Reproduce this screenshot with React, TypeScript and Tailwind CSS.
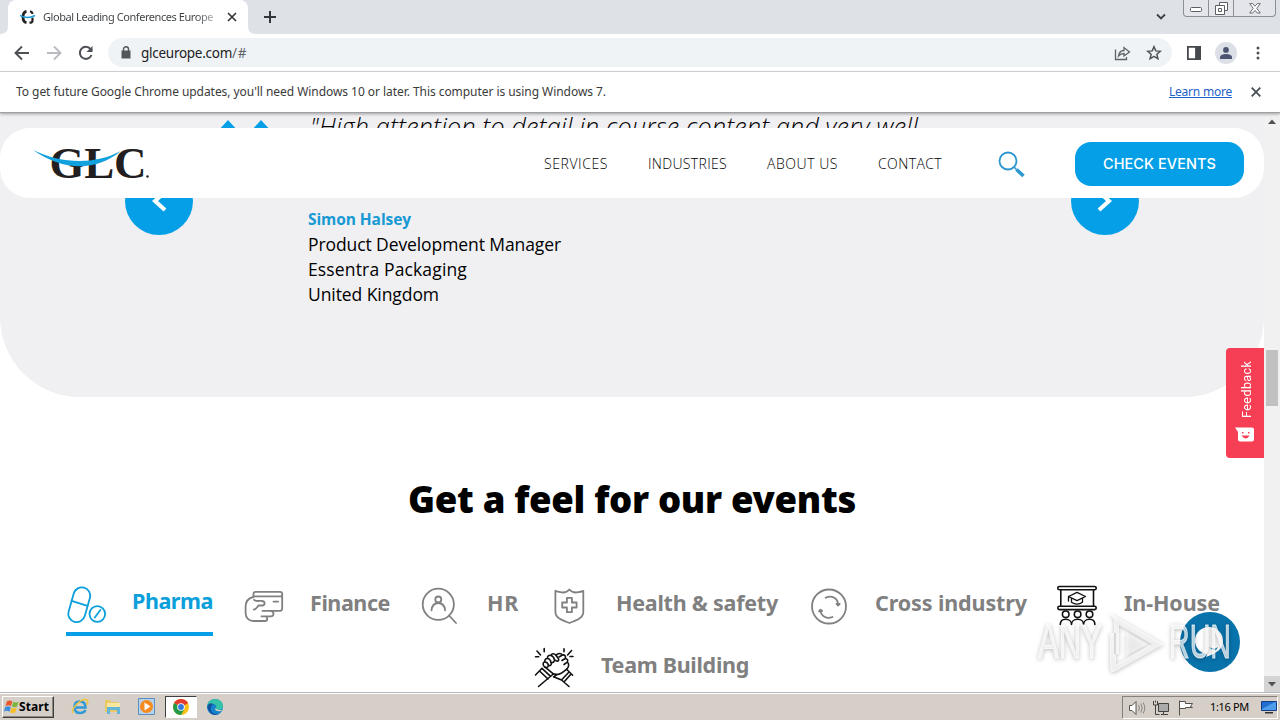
import React, { useLayoutEffect, useRef, useState } from 'react';

// --- Helpers ---

interface FitProps {
  width: number;
  className?: string;
  children: string;
}

// Single line of text, tracked so that it fills the given width
const Fit: React.FC<FitProps> = ({ width, className = '', children }) => {
  const ref = useRef<HTMLSpanElement>(null);
  const [spacing, setSpacing] = useState(0);

  useLayoutEffect(() => {
    if (!ref.current) return;
    const natural = ref.current.getBoundingClientRect().width;
    setSpacing((width - natural) / children.length);
  }, []);

  return (
    <span className={`block whitespace-nowrap ${className}`} style={{ width }}>
      <span ref={ref} style={{ letterSpacing: spacing }}>{children}</span>
    </span>
  );
};

const iconProps = {
  width: 40,
  height: 40,
  viewBox: '0 0 40 40',
  fill: 'none',
  stroke: 'currentColor',
  strokeWidth: 1.8,
  strokeLinecap: 'round' as const,
  strokeLinejoin: 'round' as const,
  className: 'shrink-0 overflow-visible',
};

// --- Category icons ---

const PharmaIcon = () => (
  <svg {...iconProps}>
    <rect x="4.900" y="2" width="16.800" height="35.500" rx="8.400" transform="rotate(16 13.3 19.6)" />
    <path d="M5.600 15.800 21.500 20.800M28.800 32.500l5.600-7.500" />
    <circle cx="31.300" cy="29" r="7.800" />
  </svg>
);

const FinanceIcon = () => (
  <svg {...iconProps}>
    <path d="M10.500 12V9q0-2.200 2.200-2.200H37q2.200 0 2.200 2.200v14.600q0 2.200-2.200 2.200H19.500" />
    <path d="M10.500 11.300H38.800M30.500 16.600h4.600" />
    <path d="M10.500 12C5.500 13 2.600 17 2.600 22v6c0 5 3.500 8 8 8H22c3 0 3-4.600 0-4.600h-3.500H28c3.300 0 3.300-5 0-5.500" />
    <path d="M11 14.800c2 2 6 .8 8.200 1.200 3.400.6 2.800 4.200.3 4.500h-4c-1.500 1.500-2 3.500-4.700 4.200" />
  </svg>
);

const HrIcon = () => (
  <svg {...iconProps}>
    <circle cx="18.300" cy="19.300" r="15.600" />
    <circle cx="18.300" cy="14.500" r="3" />
    <path d="M29 30.500 36 38M11.500 25.300c.5-4.500 3-7.300 6.800-7.300s6.300 2.800 6.800 7.300" />
  </svg>
);

const HealthIcon = () => (
  <svg {...iconProps}>
    <path d="M20.400 4.500Q17 8.500 11.500 7.200 8.500 6.800 6.400 5.800V27c0 6 7 8.500 14 11 7-2.500 13.900-5 13.900-11V5.800Q32 6.800 29.200 7.200 23.800 8.500 20.400 4.500Z" />
    <path d="M17.900 12.800h5v4.700h4.700v5h-4.700v4.700h-5v-4.700h-4.700v-5h4.700Z" />
  </svg>
);

const CrossIcon = () => (
  <svg {...iconProps}>
    <circle cx="21" cy="21.500" r="17" />
    <path d="M17.600 12.800C24 9.800 30 13.500 30 19.500M24.500 32C18.500 34.500 13 31 12.500 25.500" />
    <path d="m28.500 18.800 1.500 1.700 1.700-1.700ZM11 26.300l1.500-1.700 1.600 1.400Z" fill="currentColor" />
  </svg>
);

const InHouseIcon = () => (
  <svg {...iconProps} stroke="#111111" strokeWidth="1.600">
    <rect x=".8" y="1.500" width="38.400" height="3.300" rx="1.600" />
    <rect x=".8" y="21.300" width="38.400" height="3.300" rx="1.600" />
    <path d="M3.800 5v16M36.500 5v16" />
    <path d="m20 7.300-8.500 4.200 8.500 4.200 8.500-4.200ZM14.500 13.500v3.800q5.500 3.500 11 0v-3.800M11.500 11.500v4.500" strokeWidth="1.300" />
    <circle cx="8.700" cy="29.300" r="3.300" />
    <circle cx="20.600" cy="29.300" r="3.300" />
    <circle cx="32.500" cy="29.300" r="3.300" />
    <path d="M3.300 39.500c0-3 2-5.200 5.400-5.200s5.800 2.200 5.800 5.200c0-3 2.500-5.200 6.100-5.200s6 2.200 6 5.200c0-3 2.400-5.200 5.900-5.200s5.400 2.200 5.400 5.200" />
  </svg>
);

const TeamIcon = () => (
  <svg {...iconProps} stroke="#111111" strokeWidth="1.600">
    <path d="m3 4 3.500 4M10.200 1.500v3.200M1.500 9.800h3.200M37.600 3.500l-4 4.500M30 1.800v3M39 9.500h-3" />
    <path d="M9.500 18.500c-1-2 0-3.500 1.500-3.500-.8-2 .8-3.800 2.500-3.500-.5-2.200 1.500-3.800 3.500-3 .3-2 3-2.500 4.800-.5l2.700 3.800c1 2-1.500 3.200-3 1.500M11 15c2 0 3 1.500 3.500 3.500M13.500 11.500c2 0 3 1.800 3.500 4M17 8.500c2 .5 3 2 3.500 4.300M9.500 18.500c1 2.500 4 3 5 0 2 .5 3.500-1 2.500-3 2 .5 3.500-.8 3.500-2.700" />
    <path d="M22 8.300C24 6 27 5.800 28.500 8l-3.500 2M28.500 8c2.500-.5 3.500 1.500 2.800 3.500L28 13.500M31.300 11.500c2 0 3 2 2 3.700L30 17.500M33.300 15.200c2.200 1.500 1.600 5-.7 7-4 3.500-6 5.300-9.300 5.300l-4-.6-8.500-7" />
    <path d="m8 21.300 8.600 8M5.500 24l8.500 8M8 21.300 1.500 28M19.300 27 4.500 39.500M32.600 22.200l6 6M23 27.500l-3.500 2.300 8 3.200 7.500-8M30 35l6.600-7.500M27.500 33l7.500 6.500" />
  </svg>
);

const categories = [
  { name: 'Finance', width: 80, icon: <FinanceIcon /> },
  { name: 'HR', width: 32, icon: <HrIcon /> },
  { name: 'Health & safety', width: 162, icon: <HealthIcon /> },
  { name: 'Cross industry', width: 152, icon: <CrossIcon /> },
  { name: 'In-House', width: 96, icon: <InHouseIcon /> },
];

const navLinks = [
  { name: 'SERVICES', width: 64 },
  { name: 'INDUSTRIES', width: 79 },
  { name: 'ABOUT US', width: 71 },
  { name: 'CONTACT', width: 64 },
];

// --- Browser chrome ---

const TabStrip = () => (
  <div className="flex h-[34px] shrink-0 bg-[#dee1e6]">
    <svg width="8" height="34" viewBox="0 0 8 34" fill="#fff"><path d="M8 26v8H0q8 0 8-8Z" /></svg>
    <div className="flex h-[34px] w-[240px] items-center rounded-t-lg bg-white pl-[12px]">
      <svg width="16" height="16" viewBox="0 0 16 16" fill="none">
        <path d="M6.500 2.300Q3 3 3 8t3.500 5.700" stroke="#222" strokeWidth="2.800" />
        <path d="M10 2.300q2 .5 2.700 2.500M9.500 13.700q3 0 3-2V8.500" stroke="#222" strokeWidth="2.200" />
        <path d="M0 6.500q7 4 15 0" stroke="#19a0dc" strokeWidth="1.500" />
      </svg>
      <Fit width={170} className="ml-[7px] mr-[14px] bg-gradient-to-r from-[#3c4043] from-90% to-[#b0b3b6] bg-clip-text font-['Noto_Sans'] text-[11px] text-transparent">Global Leading Conferences Europe</Fit>
      <svg width="10" height="10" viewBox="0 0 10 10" stroke="#33373b" strokeWidth="1.700"><path d="m1 1 8 8M9 1 1 9" /></svg>
    </div>
    <svg width="8" height="34" viewBox="0 0 8 34" fill="#fff"><path d="M0 26v8h8q-8 0-8-8Z" /></svg>
    <svg className="ml-[7px] mt-[10px]" width="14" height="14" viewBox="0 0 14 14" stroke="#33373b" strokeWidth="2"><path d="M7 1v12M1 7h12" /></svg>
    <svg className="ml-auto mt-[13px]" width="10" height="8" viewBox="0 0 10 8" fill="none" stroke="#3c4043" strokeWidth="1.800"><path d="m1 1.500 4 4 4-4" /></svg>
    <div className="ml-[17px] mr-[4px] flex h-[17px] w-[93px] rounded-b-[4px] border border-t-0 border-[#8b8f98] bg-[#e3e5ea]">
      <div className="flex w-[25px] items-center justify-center border-r border-[#8b8f98] pt-[3px]">
        <svg width="12" height="5" viewBox="0 0 12 5" fill="#fff" stroke="#5b5f66"><rect x=".5" y=".5" width="11" height="4" rx="1" /></svg>
      </div>
      <div className="flex w-[25px] items-center justify-center border-r border-[#8b8f98]">
        <svg width="13" height="13" viewBox="0 0 13 13" fill="#fff" stroke="#5b5f66"><path d="M4.500.5h8v8h-8Z" /><path d="M.5 3.500h9v9h-9Z" /><path d="M3.500 6.500h3v3h-3Z" /></svg>
      </div>
      <div className="flex flex-1 items-center justify-center">
        <svg width="12" height="11" viewBox="0 0 12 11" fill="#fff" stroke="#5b5f66" strokeWidth=".9"><path d="M.7.600h3L6 3.200 8.300.600h3L7.800 5.300l3.500 4.700h-3L6 7.400 3.700 10h-3l3.500-4.700Z" /></svg>
      </div>
    </div>
  </div>
);

const Toolbar = () => (
  <div className="flex h-[38px] shrink-0 items-center border-b border-[#d9dbdf] bg-white pl-[14px]">
    <svg width="16" height="16" viewBox="0 0 16 16" fill="none" stroke="#4d5156" strokeWidth="1.900"><path d="M15 8H2M8 1.500 1.500 8 8 14.500" /></svg>
    <svg className="ml-[17px]" width="16" height="16" viewBox="0 0 16 16" fill="none" stroke="#b9bbbe" strokeWidth="1.900"><path d="M0 8h13M7 1.500 13.500 8 7 14.500" /></svg>
    <svg className="ml-[15px]" width="16" height="16" viewBox="0 0 16 16" fill="none" stroke="#4d5156" strokeWidth="2"><path d="M13.500 10A6 6 0 1 1 12.500 4L14 5.500" /><path d="M14.500 1v6h-6Z" fill="#4d5156" stroke="none" /></svg>
    <div className="ml-[14px] flex h-[29px] w-[1064px] items-center rounded-full bg-[#f0f3f5] pl-[13px]">
      <svg width="10" height="13" viewBox="0 0 10 13" fill="#53575c"><path d="M.5 4.500h9v8h-9Z" /><path d="M2.500 5V3.300a2.500 2.500 0 0 1 5 0V5" fill="none" stroke="#53575c" strokeWidth="1.400" /></svg>
      <div className="ml-[10px] mt-px flex font-['Noto_Sans'] text-[13.5px]">
        <Fit width={91} className="text-[#202124]">glceurope.com</Fit>
        <Fit width={15} className="text-[#5f6368]">/#</Fit>
      </div>
      <svg className="ml-auto" width="17" height="16" viewBox="0 0 17 16" fill="none" stroke="#5f6368" strokeWidth="1.300"><path d="M1.500 4.500v10h11V12" /><path d="M4.500 11C5 7.500 7 5.500 10 5.500v-3L15.500 7 10 11V8.500Q6.500 8.500 4.500 11Z" /></svg>
      <svg className="ml-[15px] mr-[10px]" width="16" height="16" viewBox="0 0 16 16" fill="none" stroke="#4d5156" strokeWidth="1.500"><path d="m8 1.700 1.800 4.200 4.500.4-3.400 3 1 4.500L8 11.400l-3.900 2.400 1-4.500-3.400-3 4.500-.4Z" /></svg>
    </div>
    <svg className="ml-[15px]" width="14" height="14" viewBox="0 0 14 14" fill="none" stroke="#46494e" strokeWidth="1.800"><path d="M.9.900h12.200v12.200H.9Z" /><path d="M9 1h4v12H9Z" fill="#46494e" /></svg>
    <div className="ml-[14px] flex size-[22px] items-center justify-center rounded-full bg-[#dce0e6]">
      <svg width="12" height="12" viewBox="0 0 12 12" fill="#4b5572"><circle cx="6" cy="2.900" r="2.900" /><path d="M0 12V9.800Q1 7 6 7t6 2.800V12Z" /></svg>
    </div>
    <svg className="ml-[19px]" width="4" height="14" viewBox="0 0 4 14" fill="#4d5156"><circle cx="2" cy="2" r="1.500" /><circle cx="2" cy="7" r="1.500" /><circle cx="2" cy="12" r="1.500" /></svg>
  </div>
);

const InfoBar = () => (
  <div className="z-20 flex h-[41px] shrink-0 items-center border-b border-[#9fa0a3] bg-white pl-4 font-['Noto_Sans'] text-[12px] shadow-[0_1px_3px_rgba(0,0,0,0.35)]">
    <Fit width={590} className="text-[#3a3a3a]">To get future Google Chrome updates, you'll need Windows 10 or later. This computer is using Windows 7.</Fit>
    <Fit width={63} className="ml-auto text-[#1f62c9] underline">Learn more</Fit>
    <svg className="ml-[19px] mr-[19px]" width="10" height="10" viewBox="0 0 10 10" stroke="#4d5156" strokeWidth="1.900"><path d="m.7.700 8.600 8.600M9.300.700.7 9.300" /></svg>
  </div>
);

const Scrollbar = () => (
  <div className="flex w-4 shrink-0 flex-col items-center bg-[#f1f1f1]">
    <svg className="mt-[6px]" width="8" height="5" viewBox="0 0 8 5" fill="#505050"><path d="m0 5 4-4.500L8 5Z" /></svg>
    <div className="mt-[226px] h-[56px] w-3 bg-[#c1c1c1]" />
    <div className="mt-auto flex h-4 w-full items-center justify-center bg-[#d4d4d4]">
      <svg width="8" height="5" viewBox="0 0 8 5" fill="#505050"><path d="m0 0 4 4.500L8 0Z" /></svg>
    </div>
  </div>
);

// --- Page ---

const SiteHeader = () => (
  <header className="absolute inset-x-0 top-[15px] flex h-[70px] items-center rounded-[30px] bg-white pl-[32px] pr-5">
    <svg width="120" height="36" viewBox="0 0 120 36" className="overflow-visible">
      <text x="17.500" y="32.500" fontFamily="'Liberation Serif', serif" fontWeight="700" fontSize="45" textLength="97" fill="#231f20">GLC</text>
      <path d="M1 5C30 19 62 20 89 6 62 28 30 25 1 5Z" fill="#12a1df" />
      <circle cx="115.500" cy="31.500" r="1.200" fill="#231f20" />
    </svg>
    <nav className="ml-[392px] flex gap-10 font-['Open_Sans'] text-[14px] font-light text-black">
      {navLinks.map(link => (
        <Fit key={link.name} width={link.width}>{link.name}</Fit>
      ))}
    </nav>
    <svg className="ml-[56px] mt-[4px]" width="28" height="28" viewBox="0 0 28 28" fill="none" stroke="#2d97cf">
      <circle cx="10" cy="10" r="8.500" strokeWidth="1.800" />
      <path d="m16 16 2.500 2.500" strokeWidth="1.600" />
      <path d="m18.500 18.500 7 6.500" strokeWidth="3.600" />
    </svg>
    <button className="ml-auto mt-[2px] flex h-[44px] w-[169px] items-center justify-center rounded-[16px] bg-[#049fe6] font-['Inter'] text-[14.5px] font-medium text-white">
      <Fit width={113}>CHECK EVENTS</Fit>
    </button>
  </header>
);

const Testimonial = () => (
  <section className="flex h-[284px] items-start overflow-hidden rounded-b-[80px] bg-[#f0f0f3]">
    <div className="ml-[125px] mt-[54px] flex size-[68px] items-center justify-center rounded-full bg-[#049fe6]">
      <svg width="18" height="24" viewBox="0 0 18 24" fill="none" stroke="#fff" strokeWidth="4"><path d="M15 3 5 12l10 9" /></svg>
    </div>
    <svg className="ml-[24px] mt-[7px]" width="56" height="24" viewBox="0 0 56 24" fill="#049fe6"><path d="m11 0 11 12-11 12L0 12ZM44 0l11 12-11 12-11-12Z" /></svg>
    <div className="-mt-[3px] ml-[35px] font-['Open_Sans'] text-black">
      <Fit width={608} className="h-[97px] pl-[2px] text-[25px] font-light italic leading-8">"High attention to detail in course content and very well</Fit>
      <Fit width={103} className="text-[15.5px] font-bold leading-[25px] text-[#1799d3]">Simon Halsey</Fit>
      <Fit width={253} className="text-[17.5px] leading-[25px]">Product Development Manager</Fit>
      <Fit width={159} className="text-[17.5px] leading-[25px]">Essentra Packaging</Fit>
      <Fit width={131} className="text-[17.5px] leading-[25px]">United Kingdom</Fit>
    </div>
    <div className="ml-auto mr-[125px] mt-[54px] flex size-[68px] items-center justify-center rounded-full bg-[#049fe6]">
      <svg width="18" height="24" viewBox="0 0 18 24" fill="none" stroke="#fff" strokeWidth="4"><path d="m3 3 10 9-10 9" /></svg>
    </div>
  </section>
);

const Events = () => (
  <section className="pt-[78px] font-['Noto_Sans'] font-bold text-[#808080]">
    <h2 className="ml-[408px] text-[36.5px] font-black leading-[48px] text-black">
      <Fit width={448}>Get a feel for our events</Fit>
    </h2>
    <div className="mt-[62px] flex h-[51px] gap-[30px] pl-[66px] text-[21.5px] leading-[30px]">
      <div className="flex w-[147px] gap-[26px] border-b-4 border-[#049fe6] text-[#0b9fdb]">
        <PharmaIcon />
        <Fit width={81} className="pt-px">Pharma</Fit>
      </div>
      {categories.map(category => (
        <div key={category.name} className="flex gap-[27px]">
          {category.icon}
          <Fit width={category.width} className="pt-[3px]">{category.name}</Fit>
        </div>
      ))}
    </div>
    <div className="mt-[11px] flex gap-[27px] pl-[534px] text-[21.5px] leading-[30px]">
      <TeamIcon />
      <Fit width={148} className="pt-[3px]">Team Building</Fit>
    </div>
  </section>
);

const Watermark = () => (
  <svg className="absolute left-[1034px] top-[495px] drop-shadow-[0_1px_2px_rgba(0,0,0,0.35)]" width="204" height="70" viewBox="0 0 204 70" fill="#fff" fillOpacity=".7" stroke="#fff" strokeOpacity=".7">
    <text x="4" y="50" fontFamily="'Liberation Sans Narrow', 'Liberation Sans', sans-serif" fontSize="48" textLength="64" lengthAdjust="spacingAndGlyphs">ANY</text>
    <path d="M76 5 130 36 82 63Q76 66 76 60V25h6v31l36-20-33-19v29h-5V12Z" fillRule="evenodd" stroke="none" />
    <path d="M92 24 113 36 92 48Z" fillOpacity=".55" stroke="none" />
    <text x="135" y="50" fontFamily="'Liberation Sans Narrow', 'Liberation Sans', sans-serif" fontSize="48" textLength="62" lengthAdjust="spacingAndGlyphs">RUN</text>
  </svg>
);

const Feedback = () => (
  <div className="absolute right-0 top-[235px] flex h-[110px] w-[38px] flex-col items-center rounded-l-[4px] bg-[#f63e54] pt-[12px] text-white">
    <span className="ml-[3px] h-[58px] rotate-180 font-['Roboto'] text-[12.5px] leading-4 tracking-[0.45px] [writing-mode:vertical-rl]">Feedback</span>
    <svg className="mt-[9px]" width="20" height="16" viewBox="0 0 20 16" fill="#fff">
      <path d="M0 .5h17q2 0 2 2v10q0 2-2 2H5q-2 0-2-2V5Z" />
      <path d="M6.500 8.500q4.500 6 8 0Z" fill="#f63e54" />
      <path d="M7 5h1.500v1.500H7ZM13 5h1.500v1.500H13Z" fill="#f63e54" />
    </svg>
  </div>
);

const ChatButton = () => (
  <div className="absolute left-[1180px] top-[499px] flex size-[60px] items-center justify-center rounded-full bg-[#0872aa]">
    <svg width="30" height="32" viewBox="0 0 30 32"><path d="M15 1a14 14 0 0 1 13 14c0 8-6 12-17 16l1-3A13.500 13.500 0 0 1 15 1Z" fill="#fff" /><path d="M14 21q5 3 9 0l-2 3q-4 1-7-3Z" fill="#0872aa" /></svg>
  </div>
);

// --- Windows taskbar ---

const Taskbar = () => (
  <div className="flex h-7 shrink-0 items-start border-t border-[#b9b7b3] bg-[#d5cfc8] pt-px shadow-[inset_0_1px_0_#fff]">
    <div className="ml-[2px] mt-[2px] flex h-[22px] w-[52px] items-center border border-b-[#3f3f3f] border-l-white border-r-[#3f3f3f] border-t-white pl-px shadow-[inset_-1px_-1px_0_#8c8983]">
      <svg width="15" height="16" viewBox="0 0 16 16"><path d="M3 2q3-2 6 0L7.500 7Q5 5 1.500 7Z" fill="#e9582b" /><path d="M10 2.500q3 1.500 5.500 0L14 7.500Q11 9 8.500 7.500Z" fill="#7db53b" /><path d="M1.200 8Q4.500 6.500 7.200 8L6 13Q3 11 0 13Z" fill="#3f8edb" /><path d="M8 8.700q3 1.500 5.700 0l-1.500 5Q9 15.500 6.700 13.500Z" fill="#f6bd2a" /></svg>
      <Fit width={30} className="font-['Noto_Sans'] text-[12px] font-bold leading-5 text-black">Start</Fit>
    </div>
    <svg className="ml-[17px] mt-[4px]" width="18" height="18" viewBox="0 0 18 18" fill="none"><path d="M14.500 12Q13 15 9 15q-5.500 0-5.500-6T9 3.500q5.500 0 5.500 6H5" stroke="#329bd6" strokeWidth="2.600" /><path d="M2 15Q0 12 6 6t10-4Q18 3 15.500 7" stroke="#f0c33c" strokeWidth="1.500" /></svg>
    <svg className="ml-[16px] mt-[5px]" width="16" height="16" viewBox="0 0 16 16"><path d="M0 1h5l1 2h7v10H0Z" fill="#e9c964" /><path d="M2 4h13v7H2Z" fill="#f8e89f" /><path d="M2 8h13v7h-3v-4H5v4H2Z" fill="#63b6d8" /></svg>
    <svg className="ml-[17px] mt-[4px]" width="17" height="17" viewBox="0 0 17 17"><path d="M.5.500h16v16H.5Z" fill="#b9d2e9" stroke="#5a8fc5" /><circle cx="8.500" cy="8.500" r="6.500" fill="#f58a1f" /><path d="m6.500 4.500 6 4-6 4Z" fill="#fff" /></svg>
    <div className="ml-[10px] mt-[2px] flex h-[22px] w-[32px] items-center justify-center border border-b-white border-l-[#3f3f3f] border-r-white border-t-[#3f3f3f] bg-white">
      <svg width="16" height="16" viewBox="0 0 16 16"><circle cx="8" cy="8" r="8" fill="#fbc116" /><path d="M8 8 1.100 4A8 8 0 0 1 14.900 4Z" fill="#e33b2e" /><path d="M8 8 1.100 4A8 8 0 0 0 8 16l3.500-6Z" fill="#229a49" /><path d="M8 8 14.900 4H8Z" fill="#e33b2e" /><circle cx="8" cy="8" r="3.800" fill="#fff" /><circle cx="8" cy="8" r="2.900" fill="#3478e0" /></svg>
    </div>
    <svg className="ml-[10px] mt-[5px]" width="16" height="16" viewBox="0 0 16 16"><circle cx="8" cy="8" r="8" fill="#1682c9" /><path d="M0 7Q2 0 8 0q8 1 8 7 0 4-5 4-3 0-2-2 1-3-2-4-4-1-7 2Z" fill="#36c2a7" /><path d="M6 5Q2 9 5 13q3 3 7 2-4 2-8-.500Q-1 10 1 6q2-3 5-1Z" fill="#11529f" /><path d="M8 9q0 4 6 3l1-1.500Q11 12 8 9Z" fill="#d5cfc8" /></svg>

    <div className="ml-auto mr-[2px] mt-[2px] flex h-[23px] w-[156px] items-center border border-b-white border-l-[#85827c] border-r-white border-t-[#85827c] pl-[6px]">
      <svg width="17" height="16" viewBox="0 0 17 16" fill="#fff" stroke="#55534f"><path d="M.5 5.500H3l4-4v13l-4-4H.5Z" /><path d="M9.500 5q2 3 0 6M11.800 3.500q3 4.500 0 9M14 2.500q3.500 5.500 0 11" fill="none" stroke="#77746f" strokeWidth=".8" /></svg>
      <svg className="ml-[7px]" width="16" height="16" viewBox="0 0 16 16" fill="#fff" stroke="#44423f"><path d="M5.500 3.500h10v8h-10Z" fill="#aaa" /><path d="M8 14.500h7M.5 1v4h4V1M2.500 5v9.500h4M2.500.500v2M10.500 12v2" fill="none" /></svg>
      <svg className="ml-[9px]" width="16" height="16" viewBox="0 0 16 16" fill="#fff" stroke="#55534f"><path d="M1.500 15.500V.500M1.500 1.500h6v2h7l-2 3 2 1h-7v1h-6Z" /></svg>
      <Fit width={39} className="ml-[16px] font-['Noto_Sans'] text-[11px] text-black">1:16 PM</Fit>
      <svg className="ml-[12px]" width="16" height="13" viewBox="0 0 16 13"><path d="M.5.500h15v9H.5Z" fill="#226ed0" stroke="#143c86" /><path d="m1 8 13-7h1v8H1Z" fill="#4f9ceb" /><path d="M4 11h8v1.500H4Z" fill="#333" /></svg>
    </div>
  </div>
);

const App: React.FC = () => {
  return (
    <div className="flex h-[720px] w-[1280px] flex-col overflow-hidden bg-white">
      <TabStrip />
      <Toolbar />
      <InfoBar />
      <div className="flex h-[579px] shrink-0">
        <main className="relative w-[1264px] overflow-hidden bg-white">
          <Testimonial />
          <Events />
          <SiteHeader />
          <Feedback />
          <ChatButton />
          <Watermark />
        </main>
        <Scrollbar />
      </div>
      <Taskbar />
    </div>
  );
};

export default App;
